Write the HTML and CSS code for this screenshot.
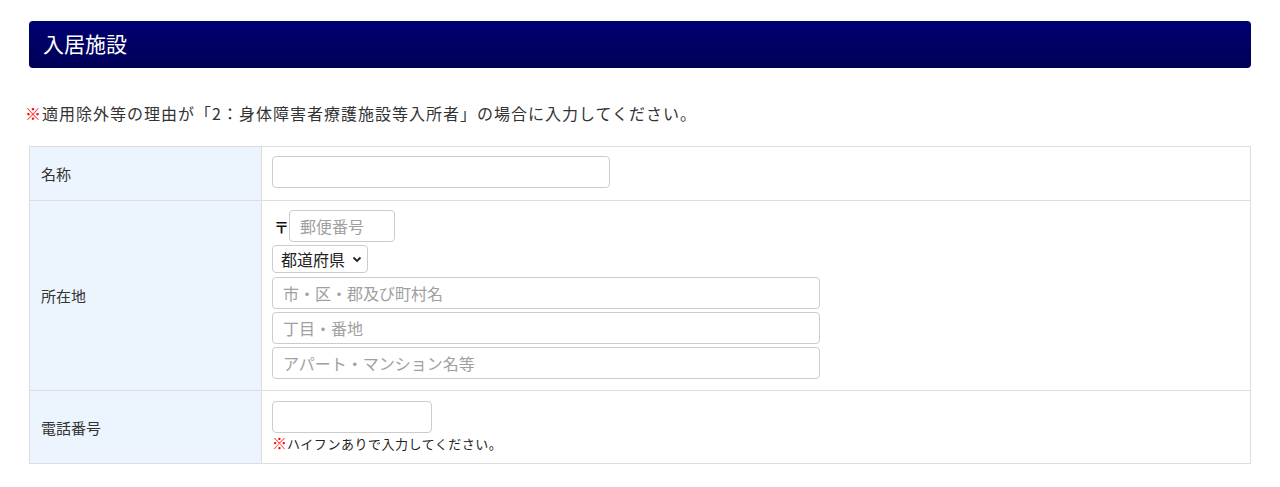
FILE: index.html
```html
<!DOCTYPE html>
<html lang="ja">
<head>
  <meta charset="UTF-8">
  <meta name="viewport" content="width=device-width, initial-scale=1.0">
  <title>入居施設</title>
  <link rel="stylesheet" href="styles.css">
</head>
<body>
  <main class="page">
    <h2 class="section-title">入居施設</h2>
    <p class="notice"><span class="mark">※</span>適用除外等の理由が「2：身体障害者療護施設等入所者」の場合に入力してください。</p>
    <table class="form-table">
      <tr class="row-name">
        <th>名称</th>
        <td><input type="text" class="input input-name"></td>
      </tr>
      <tr class="row-address">
        <th>所在地</th>
        <td>
          <div class="zip">
            <span class="zip-mark">〒</span>
            <input type="text" class="input input-zip" placeholder="郵便番号">
          </div>
          <div class="select-wrap">
            <select class="select">
              <option>都道府県</option>
            </select>
            <svg class="chevron" width="10" height="7" viewBox="0 0 10 7"><path d="M1.5 1.5 L5 5 L8.5 1.5" fill="none" stroke="#222" stroke-width="1.8"/></svg>
          </div>
          <input type="text" class="input input-wide" placeholder="市・区・郡及び町村名">
          <input type="text" class="input input-wide" placeholder="丁目・番地">
          <input type="text" class="input input-wide" placeholder="アパート・マンション名等">
        </td>
      </tr>
      <tr class="row-tel">
        <th>電話番号</th>
        <td>
          <input type="text" class="input input-tel">
          <p class="hint"><span class="mark mark-hint">※</span>ハイフンありで入力してください。</p>
        </td>
      </tr>
    </table>
  </main>
</body>
</html>
```

FILE: styles.css
```css
body {
  margin: 0;
  font-family: "Noto Sans CJK JP", "Noto Sans", sans-serif;
  color: #333333;
  background-color: #ffffff;
}

.page {
  padding: 21px 29px 0 29px;
}

.section-title {
  margin: 0;
  height: 47px;
  line-height: 45px;
  padding-left: 14px;
  font-size: 21px;
  font-weight: normal;
  color: #ffffff;
  background: linear-gradient(#000072, #000058);
  border-radius: 4px;
}

.notice {
  margin: 33px 0 0 -4px;
  font-size: 16px;
  line-height: 24px;
  letter-spacing: 1px;
}

.mark {
  color: #ff0000;
}

.form-table {
  width: 100%;
  margin-top: 21px;
  border-collapse: collapse;
  border: 1px solid #dddddd;
}

.form-table th,
.form-table td {
  border: 1px solid #dddddd;
}

.form-table th {
  width: 208px;
  padding: 0 12px 0 11px;
  text-align: left;
  font-weight: normal;
  font-size: 15px;
  background-color: #ecf5fd;
}

.form-table td {
  padding: 9px 10px 12px 10px;
  vertical-align: top;
}

.input {
  display: block;
  box-sizing: border-box;
  height: 32px;
  padding: 0 10px;
  font-family: inherit;
  font-size: 16px;
  color: #333333;
  border: 1px solid #cccccc;
  border-radius: 4px;
  background: #ffffff;
  outline: none;
}

.input::placeholder {
  color: #a0a0a0;
}

.input-name {
  width: 338px;
}

.zip {
  display: flex;
  align-items: center;
}

.zip-mark {
  width: 17px;
  padding-left: 2px;
  box-sizing: border-box;
  font-size: 15px;
  font-weight: bold;
  color: #111111;
}

.input-zip {
  width: 106px;
}

.select-wrap {
  position: relative;
  width: 96px;
  margin: 3px 0 4px 0;
}

.select {
  display: block;
  width: 96px;
  height: 28px;
  padding: 0 0 0 8px;
  font-family: inherit;
  font-size: 16px;
  color: #222222;
  background: #ffffff;
  border: 1px solid #cccccc;
  border-radius: 4px;
  appearance: none;
  -webkit-appearance: none;
}

.chevron {
  position: absolute;
  right: 6px;
  top: 11px;
}

.input-wide {
  width: 548px;
  margin-top: 3px;
}

.row-address td {
  padding-bottom: 11px;
}

.row-tel td {
  padding-top: 10px;
  padding-bottom: 9px;
}

.input-tel {
  width: 160px;
}

.hint {
  margin: 1px 0 0 0;
  font-size: 13px;
  line-height: 20px;
  letter-spacing: 0.5px;
  color: #222222;
}

.mark-hint {
  font-size: 15px;
  line-height: 1;
  font-weight: bold;
  letter-spacing: 0;
}
```
